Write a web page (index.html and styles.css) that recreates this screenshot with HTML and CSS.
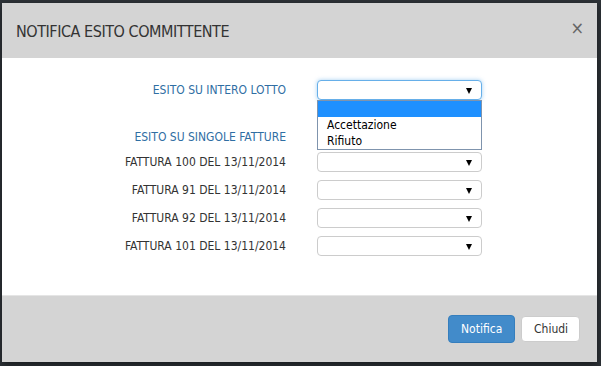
FILE: index.html
```html
<!DOCTYPE html>
<html lang="it">
<head>
    <meta charset="UTF-8">
    <meta name="viewport" content="width=device-width, initial-scale=1.0">
    <title>Notifica esito committente</title>
    <link rel="stylesheet" href="styles.css">
</head>
<body>
    <div class="modal">
        <div class="modal-header">
            <h4 class="modal-title">NOTIFICA ESITO COMMITTENTE</h4>
            <span class="close">&times;</span>
        </div>
        <div class="modal-body">
            <div class="form-row">
                <label class="label-blue">ESITO SU INTERO LOTTO</label>
                <div class="select-wrap">
                    <div class="select-box focused"><span class="caret"></span></div>
                    <ul class="dropdown">
                        <li class="selected">&nbsp;</li>
                        <li>Accettazione</li>
                        <li>Rifiuto</li>
                    </ul>
                </div>
            </div>
            <div class="form-row section">
                <label class="label-blue">ESITO SU SINGOLE FATTURE</label>
            </div>
            <div class="form-row">
                <label>FATTURA 100 DEL 13/11/2014</label>
                <div class="select-box"><span class="caret"></span></div>
            </div>
            <div class="form-row">
                <label>FATTURA 91 DEL 13/11/2014</label>
                <div class="select-box"><span class="caret"></span></div>
            </div>
            <div class="form-row">
                <label>FATTURA 92 DEL 13/11/2014</label>
                <div class="select-box"><span class="caret"></span></div>
            </div>
            <div class="form-row">
                <label>FATTURA 101 DEL 13/11/2014</label>
                <div class="select-box"><span class="caret"></span></div>
            </div>
        </div>
        <div class="modal-footer">
            <button class="btn btn-primary">Notifica</button>
            <button class="btn btn-default">Chiudi</button>
        </div>
    </div>
</body>
</html>
```

FILE: styles.css
```css
body {
    font-family: "DejaVu Sans Condensed", "DejaVu Sans", sans-serif;
    background-color: #2e3338;
    margin: 0;
    height: 366px;
    padding: 3px 4px 4px 2px;
    box-sizing: border-box;
}
.modal {
    display: flex;
    flex-direction: column;
    height: 100%;
    background: white;
    box-shadow: 0 3px 9px rgba(0, 0, 0, 0.5);
}
.modal-header {
    height: 55px;
    background: #d4d4d4;
    display: flex;
    align-items: center;
    justify-content: space-between;
    padding: 0 13px 0 14px;
    box-sizing: border-box;
}
.modal-title {
    margin: 0;
    font-size: 16px;
    letter-spacing: -0.45px;
    font-weight: normal;
    color: #333;
    padding-top: 2px;
}
.close {
    font-size: 18px;
    color: #666;
    line-height: 1;
    margin-top: -6px;
}
.modal-body {
    flex: 1;
    padding-top: 22px;
    font-size: 12px;
}
.form-row {
    display: grid;
    grid-template-columns: 284px 165px;
    column-gap: 31px;
    align-items: center;
    margin-bottom: 8px;
}
.form-row label {
    text-align: right;
    color: #333;
}
.form-row .label-blue {
    color: #2f6ea3;
}
.form-row.section {
    margin-top: 29px;
    margin-bottom: 7px;
    height: 16px;
}
.select-wrap {
    position: relative;
}
.select-box {
    position: relative;
    height: 20px;
    border: 1px solid #ccc;
    border-radius: 4px;
    box-sizing: border-box;
    background: white;
}
.select-box.focused {
    border-color: #66afe9;
    box-shadow: 0 0 4px rgba(102, 175, 233, 0.6);
}
.caret {
    position: absolute;
    right: 9px;
    top: 7px;
    border-left: 3px solid transparent;
    border-right: 3px solid transparent;
    border-top: 6px solid #000;
}
.dropdown {
    position: absolute;
    top: 20px;
    left: 0;
    width: 165px;
    box-sizing: border-box;
    margin: 0;
    padding: 0;
    list-style: none;
    border: 1px solid #7f94ad;
    background: white;
    color: #000;
    font-size: 12px;
}
.dropdown li {
    height: 16px;
    line-height: 16px;
    padding-left: 9px;
}
.dropdown li.selected {
    background: #1e90ff;
}
.modal-footer {
    height: 67px;
    background: #d4d4d4;
    border-top: 1px solid #e5e5e5;
    box-sizing: border-box;
    display: flex;
    align-items: center;
    justify-content: flex-end;
    gap: 6px;
    padding: 0 17px 0 0;
}
.btn {
    font-family: inherit;
    font-size: 12px;
    height: 28px;
    border-radius: 4px;
    padding: 0 12px;
    cursor: pointer;
}
.btn-primary {
    background-color: #428bca;
    border: 1px solid #357ebd;
    color: white;
    width: 67px;
}
.btn-default {
    background-color: white;
    border: 1px solid #ccc;
    color: #333;
    width: 59px;
    height: 26px;
}
```
